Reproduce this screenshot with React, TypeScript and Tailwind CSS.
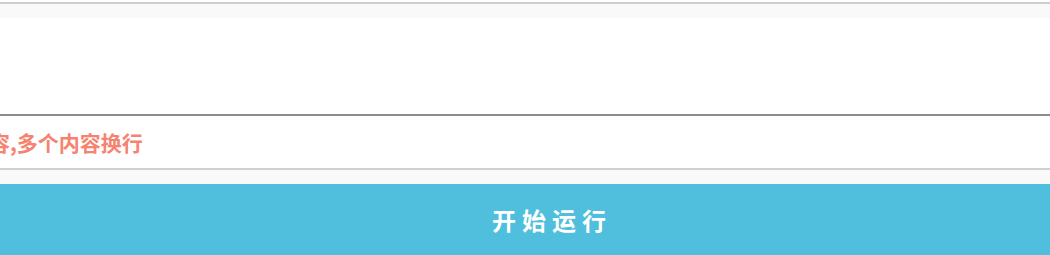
import React from "react";

export default function App() {
  return (
    <div className="w-[1050px] h-[255px] overflow-hidden bg-[#f9f9f9]" style={{ fontFamily: '"Noto Sans CJK SC", "Noto Sans", sans-serif' }}>
      <div className="ml-[-88px] w-[1280px] flex flex-col">
        <div className="h-[2px] bg-white" />
        <div className="h-[2px] bg-[#cdcdcd]" />
        <div className="h-[14px] bg-[#f9f9f9]" />
        <div className="h-[96px] bg-white" />
        <div className="h-[2px] bg-[#8c8c8c]" />
        <div className="h-[52px] bg-white flex items-center">
          <span className="ml-[-7px] text-[21px] font-bold text-[#f6836f] leading-none whitespace-nowrap">请输入内容,多个内容换行</span>
        </div>
        <div className="h-[2px] bg-[#cfcfcf]" />
        <div className="h-[14px] bg-[#f9f9f9]" />
        <button className="h-[71px] w-full bg-[#50bfdd] text-white text-[24px] font-bold tracking-[6px] flex items-center justify-center">
          开始运行
        </button>
      </div>
    </div>
  );
}
